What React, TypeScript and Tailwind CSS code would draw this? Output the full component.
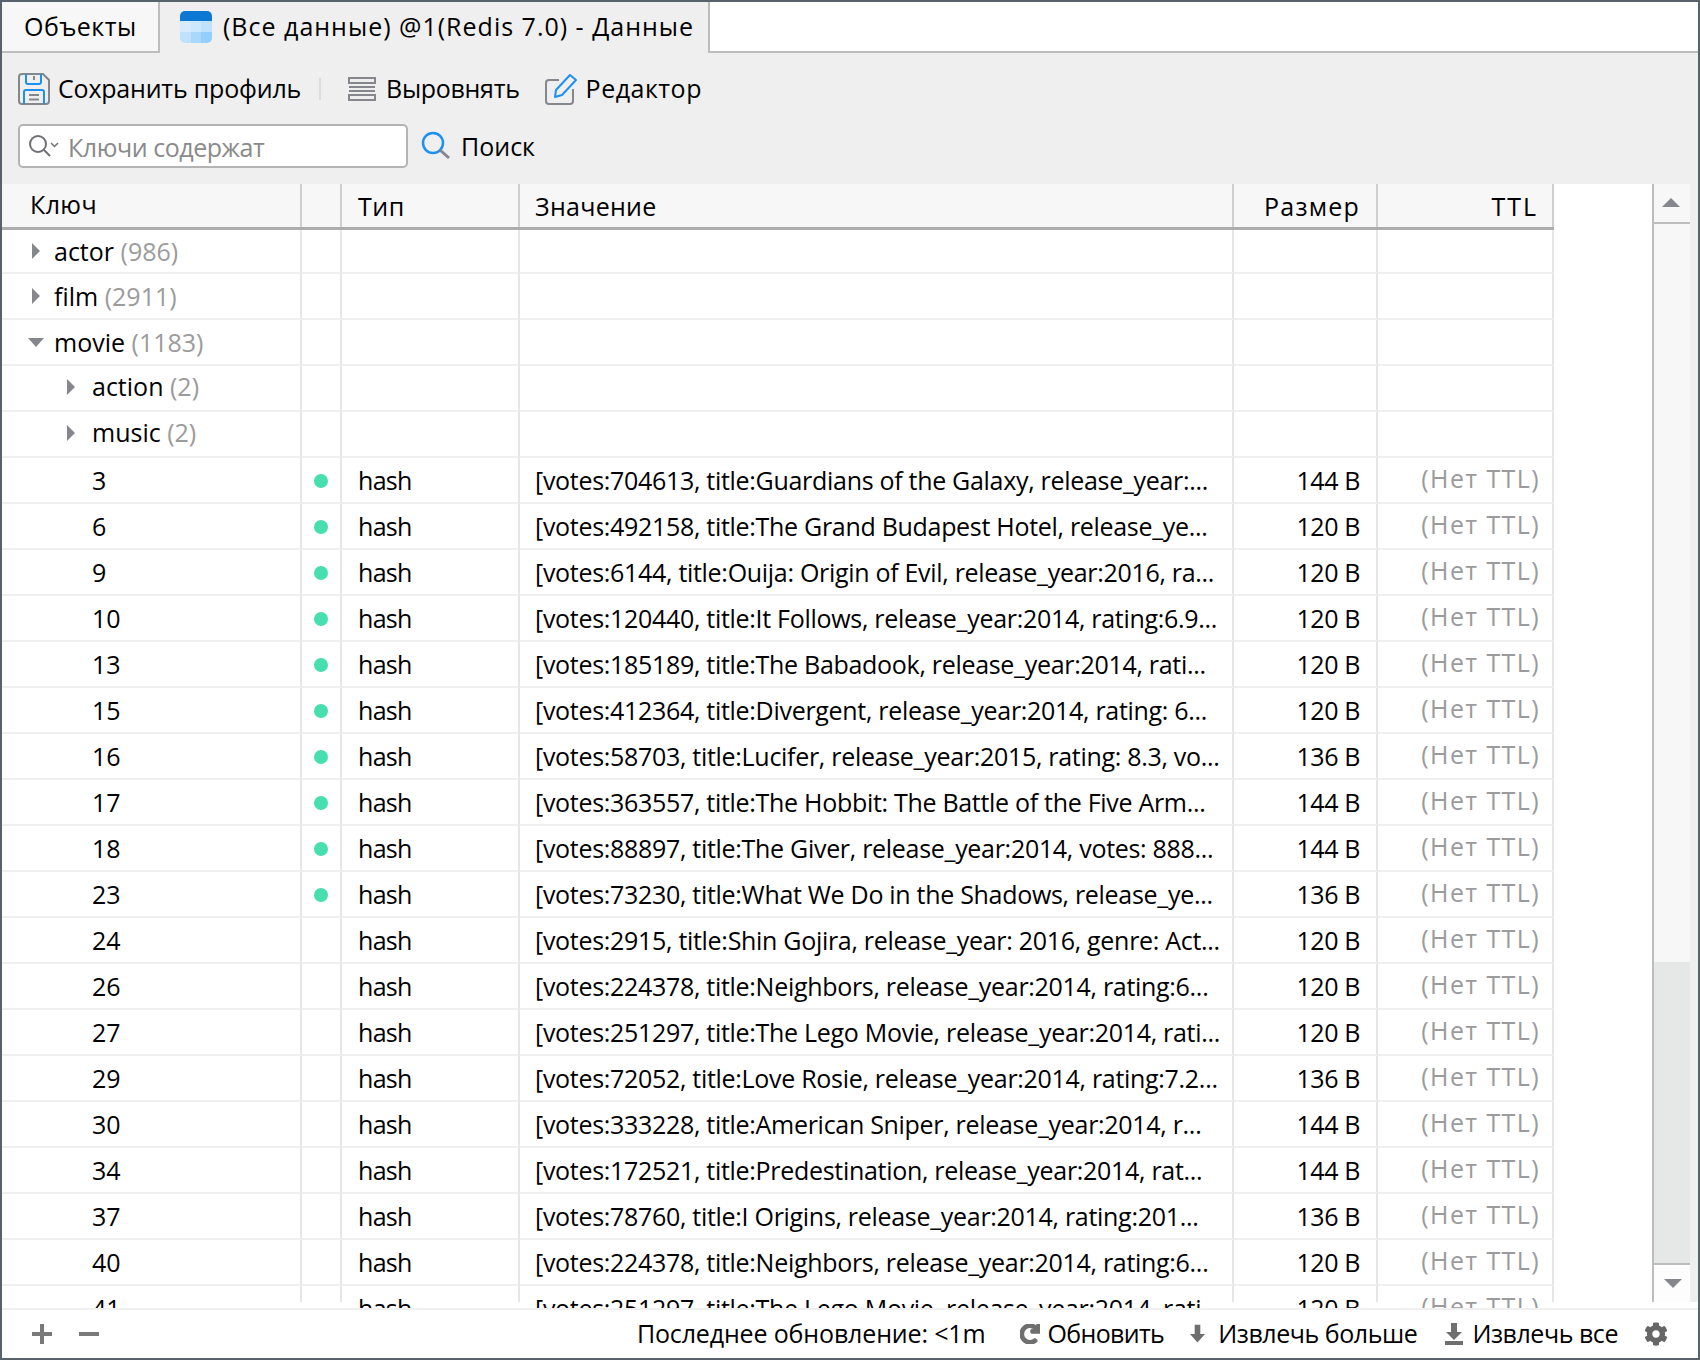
import { FaCog, FaRedo } from "react-icons/fa";

const rows: [string, string, string, boolean][] = [
  ["3", "[votes:704613, title:Guardians of the Galaxy, release_year:...", "144 B", true],
  ["6", "[votes:492158, title:The Grand Budapest Hotel, release_ye...", "120 B", true],
  ["9", "[votes:6144, title:Ouija: Origin of Evil, release_year:2016, ra...", "120 B", true],
  ["10", "[votes:120440, title:It Follows, release_year:2014, rating:6.9...", "120 B", true],
  ["13", "[votes:185189, title:The Babadook, release_year:2014, rati...", "120 B", true],
  ["15", "[votes:412364, title:Divergent, release_year:2014, rating: 6...", "120 B", true],
  ["16", "[votes:58703, title:Lucifer, release_year:2015, rating: 8.3, vo...", "136 B", true],
  ["17", "[votes:363557, title:The Hobbit: The Battle of the Five Arm...", "144 B", true],
  ["18", "[votes:88897, title:The Giver, release_year:2014, votes: 888...", "144 B", true],
  ["23", "[votes:73230, title:What We Do in the Shadows, release_ye...", "136 B", true],
  ["24", "[votes:2915, title:Shin Gojira, release_year: 2016, genre: Act...", "120 B", false],
  ["26", "[votes:224378, title:Neighbors, release_year:2014, rating:6...", "120 B", false],
  ["27", "[votes:251297, title:The Lego Movie, release_year:2014, rati...", "120 B", false],
  ["29", "[votes:72052, title:Love Rosie, release_year:2014, rating:7.2...", "136 B", false],
  ["30", "[votes:333228, title:American Sniper, release_year:2014, r...", "144 B", false],
  ["34", "[votes:172521, title:Predestination, release_year:2014, rat...", "144 B", false],
  ["37", "[votes:78760, title:I Origins, release_year:2014, rating:201...", "136 B", false],
  ["40", "[votes:224378, title:Neighbors, release_year:2014, rating:6...", "120 B", false],
  ["41", "[votes:251297, title:The Lego Movie, release_year:2014, rati...", "120 B", false],
];
const groups: [string, string, number, boolean][] = [
  ["actor", "(986)", 0, false],
  ["film", "(2911)", 0, false],
  ["movie", "(1183)", 0, true],
  ["action", "(2)", 1, false],
  ["music", "(2)", 1, false],
];
function Caret({ open }: { open: boolean }) {
  return open ? (
    <svg width="16" height="9" viewBox="0 0 16 9" className="shrink-0"><path d="M0 0h16L8 9z" fill="#85878c" /></svg>
  ) : (
    <svg width="8" height="16" viewBox="0 0 8 16" className="shrink-0"><path d="M0 0l8 8-8 8z" fill="#85878c" /></svg>
  );
}
const cell = "border-b-2 border-b-[#f0f0f0] border-r-2 border-r-[#e6e6e6] flex items-center shrink-0";
const tall = "h-[46px] ";
const short = "h-[44px] ";
export default function App() {
  return (
    <div className="w-[1700px] h-[1360px] bg-white border-2 border-[#57626c] flex flex-col overflow-hidden text-black text-[25px] font-['Open_Sans','Noto_Sans',sans-serif]">
      <div className="h-[51px] flex shrink-0">
        <div className="w-[158px] h-[51px] bg-[#f7f7f7] border-r-2 border-b-2 border-[#bdbdbd] flex items-center pl-[22px] tracking-[0.45px]">Объекты</div>
        <div className="h-[51px] w-[550px] bg-[#efefef] border-r-2 border-[#bdbdbd] flex items-center pl-[20px] gap-[11px] pb-[1px] tracking-[1px]">
          <svg width="32" height="32" viewBox="0 0 32 32">
            <defs><clipPath id="tabclip"><rect width="32" height="32" rx="5" /></clipPath></defs>
            <g clipPath="url(#tabclip)">
              <rect width="32" height="10" fill="#0c78d4" />
              <rect y="10" width="11" height="11" fill="#d6ecfd" /><rect x="11" y="10" width="10" height="11" fill="#cce8fe" /><rect x="21" y="10" width="11" height="11" fill="#bfe1fc" />
              <rect y="21" width="11" height="11" fill="#bfe1fc" /><rect x="11" y="21" width="10" height="11" fill="#a9d8fc" /><rect x="21" y="21" width="11" height="11" fill="#94cefb" />
            </g>
          </svg>
          <span>(Все данные) @1(Redis 7.0) - Данные</span>
        </div>
        <div className="flex-1 h-[51px] border-b-2 border-[#bdbdbd]" />
      </div>
      <div className="h-[131px] bg-[#efefef] shrink-0 flex flex-col pl-[16px]">
        <div className="h-[70px] shrink-0 flex items-center pt-[1px]">
          <svg width="32" height="32" viewBox="0 0 32 32" fill="none" className="mr-[8px]">
            <path d="M4 1h21l6 6v21a3 3 0 0 1-3 3H4a3 3 0 0 1-3-3V4a3 3 0 0 1 3-3z" stroke="#85878c" strokeWidth="2" />
            <path d="M8 1v8a2 2 0 0 0 2 2h11a2 2 0 0 0 2-2V1M6 31V19a2 2 0 0 1 2-2h16a2 2 0 0 1 2 2v12" stroke="#1e90f0" strokeWidth="2" />
            <path d="M16 3v4M11 22h10M11 26.500h10" stroke="#85878c" strokeWidth="2" />
          </svg>
          <span className="tracking-[-0.2px]">Сохранить профиль</span>
          <div className="w-[2px] h-[22px] bg-[#dcdcdc] ml-[18px] mr-[27px]" />
          <svg width="28" height="24" viewBox="0 0 28 24" fill="none" stroke="#85878c" strokeWidth="2" className="mr-[10px]">
            <rect x="1" y="1" width="26" height="5" /><path d="M1 10h26M1 14h26" /><rect x="1" y="18" width="26" height="5" />
          </svg>
          <span className="tracking-[-0.3px]">Выровнять</span>
          <svg width="32" height="34" viewBox="0 0 32 34" fill="none" className="ml-[25px] mr-[9px]">
            <path d="M14 8H4a3 3 0 0 0-3 3v18a3 3 0 0 0 3 3h21a3 3 0 0 0 3-3V17" stroke="#85878c" strokeWidth="2" />
            <path d="M10 25l1-7L25 3l6 5L17 23z" stroke="#1e90f0" strokeWidth="2" strokeLinejoin="round" />
          </svg>
          <span className="tracking-[0.5px]">Редактор</span>
        </div>
        <div className="flex items-center mt-[1px]">
          <div className="w-[390px] h-[44px] bg-white border-2 border-[#b4b4b4] rounded-[5px] flex items-center pl-[8px] pt-[3px] text-[#8a8a8a] tracking-[-0.45px]">
            <svg width="32" height="24" viewBox="0 0 32 24" fill="none" stroke="#6f7074" strokeWidth="2" className="mr-[8px] mb-[3px]">
              <circle cx="10" cy="10" r="8" /><path d="M16 16l6 6" /><path d="M23 9l3.500 3.500L30 9" strokeWidth="1.500" />
            </svg>
            Ключи содержат
          </div>
          <svg width="30" height="30" viewBox="0 0 30 30" fill="none" className="ml-[13px] mr-[10px]">
            <circle cx="12" cy="12" r="10" stroke="#1e90f0" strokeWidth="2.500" /><path d="M19 19l9 8" stroke="#85878c" strokeWidth="3" />
          </svg>
          <span className="pt-[1px]">Поиск</span>
        </div>
      </div>
      <div className="relative flex-1 min-h-0 flex overflow-hidden">
        <div className="w-[1552px] shrink-0 flex flex-col">
          <div className="flex h-[46px] shrink-0 bg-[#f7f7f7] border-b-[3px] border-[#adadad] items-center">
            <div className="w-[300px] h-full pl-[28px] pb-[2px] border-r-2 border-[#cfcfcf] flex items-center tracking-[0.4px]">Ключ</div>
            <div className="w-[40px] h-full border-r-2 border-[#cfcfcf]" />
            <div className="w-[178px] h-full pl-[16px] pt-[2px] border-r-2 border-[#cfcfcf] flex items-center tracking-[0.5px]">Тип</div>
            <div className="w-[714px] h-full pl-[15px] pt-[2px] border-r-2 border-[#cfcfcf] flex items-center tracking-[0.3px]">Значение</div>
            <div className="w-[144px] h-full pr-[16px] pt-[2px] border-r-2 border-[#cfcfcf] flex items-center justify-end tracking-[1.2px]">Размер</div>
            <div className="w-[176px] h-full pr-[14px] pt-[2px] border-r-2 border-[#cfcfcf] flex items-center justify-end tracking-[2px]">TTL</div>
          </div>
          {groups.map(([name, count, level, open], i) => {
            const h = i === 0 ? short : tall;
            return (
              <div key={name} className="flex shrink-0">
                <div className={h + cell + " w-[300px]"}>
                  <div className={level ? "w-[90px] pl-[65px] flex pb-[2px]" : open ? "w-[52px] pl-[26px] flex" : "w-[52px] pl-[30px] flex"}><Caret open={open} /></div>
                  <span className={level ? "pb-[2px]" : "pt-[2px]"}>{name} <span className="text-[#9b9b9b]">{count}</span></span>
                </div>
                <div className={h + cell + " w-[40px]"} />
                <div className={h + cell + " w-[178px]"} />
                <div className={h + cell + " w-[714px]"} />
                <div className={h + cell + " w-[144px]"} />
                <div className={h + cell + " w-[176px]"} />
              </div>
            );
          })}
          {rows.map(([id, value, size, live]) => (
            <div key={id} className="flex shrink-0">
              <div className={tall + cell + " w-[300px] pl-[90px] pt-[2px]"}>{id}</div>
              <div className={tall + cell + " w-[40px] justify-center pt-[2px]"}>
                {live && <div className="w-[14px] h-[14px] rounded-full bg-[#48dfae]" />}
              </div>
              <div className={tall + cell + " w-[178px] pl-[16px] pt-[2px] tracking-[-0.7px]"}>hash</div>
              <div className={tall + cell + " w-[714px] pl-[15px] pt-[2px] whitespace-nowrap overflow-hidden tracking-[-0.3px]"}>{value}</div>
              <div className={tall + cell + " w-[144px] pr-[16px] pt-[2px] justify-end tracking-[-0.4px]"}>{size}</div>
              <div className={tall + cell + " w-[176px] pr-[12px] pb-[3px] justify-end text-[#9b9b9b] tracking-[1.4px]"}>(Нет TTL)</div>
            </div>
          ))}
        </div>
        <div className="absolute left-[298px] top-[1118px] w-[2px] h-[6px] bg-white" />
        <div className="absolute left-[338px] top-[1118px] w-[2px] h-[6px] bg-white" />
        <div className="absolute left-[516px] top-[1118px] w-[2px] h-[6px] bg-white" />
        <div className="absolute left-[1230px] top-[1118px] w-[2px] h-[6px] bg-white" />
        <div className="absolute left-[1374px] top-[1118px] w-[2px] h-[6px] bg-white" />
        <div className="absolute left-[1550px] top-[1118px] w-[2px] h-[6px] bg-white" />
        <div className="ml-[98px] mb-[6px] flex-1 flex min-h-0">
          <div className="w-[38px] shrink-0 flex flex-col border-l-2 border-[#bdbdbd] bg-[#f7f7f7]">
            <div className="h-[40px] shrink-0 flex items-center justify-center border-b-2 border-[#bdbdbd] pb-[1px] pr-[2px]">
              <svg width="18" height="9" viewBox="0 0 18 9"><path d="M0 9L9 0l9 9z" fill="#85878c" /></svg>
            </div>
            <div className="flex-1" />
            <div className="h-[301px] shrink-0 bg-[#e6e8e8]" />
            <div className="h-[39px] shrink-0 bg-[#fdfdfd] border-t-2 border-[#bdbdbd] flex items-center justify-center pl-[2px]">
              <svg width="18" height="9" viewBox="0 0 18 9"><path d="M0 0h18L9 9z" fill="#85878c" /></svg>
            </div>
          </div>
          <div className="flex-1 bg-[#efefef]" />
        </div>
      </div>
      <div className="h-[50px] shrink-0 bg-white border-t-2 border-[#f0f0f0] flex items-center pl-[30px] pr-[30px]">
        <svg width="20" height="20" viewBox="0 0 20 20"><path d="M8 0h4v8h8v4h-8v8H8v-8H0V8h8z" fill="#7a7a7a" /></svg>
        <div className="w-[20px] h-[4px] bg-[#7a7a7a] ml-[27px]" />
        <span className="ml-auto tracking-[-0.15px]">Последнее обновление: &lt;1m</span>
        <FaRedo size={20} color="#6f6f6f" stroke="#6f6f6f" strokeWidth={50} className="ml-[35px] mr-[7px]" />
        <span className="tracking-[-0.65px]">Обновить</span>
        <svg width="15" height="20" viewBox="0 0 16 20" className="ml-[26px] mr-[13px]"><path d="M5 0h6v10h5l-8 9-8-9h5z" fill="#6f6f6f" /></svg>
        <span className="tracking-[-0.45px]">Извлечь больше</span>
        <svg width="18" height="22" viewBox="0 0 18 22" className="ml-[28px] mr-[9px]"><path d="M6 0h6v9h5l-8 8-8-8h5zM0 18h18v4H0z" fill="#6f6f6f" /></svg>
        <span className="tracking-[-0.45px]">Извлечь все</span>
        <FaCog size={24} color="#666666" className="ml-[26px]" />
      </div>
    </div>
  );
}
